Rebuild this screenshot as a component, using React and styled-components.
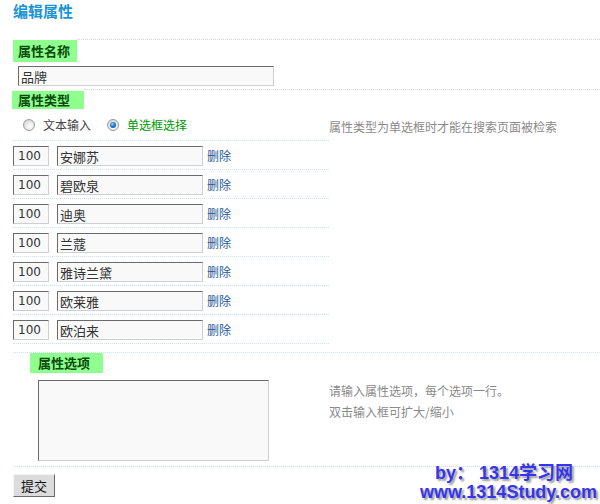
import React from "react";
import styled, { createGlobalStyle } from "styled-components";

const Global = createGlobalStyle`
  html, body { margin: 0; padding: 0; background: #fff; }
  body { font-family: "Noto Sans CJK SC", "Noto Sans", sans-serif; font-size: 12px; color: #333; }
`;

const Page = styled.div`
  position: relative;
  width: 587px;
  height: 504px;
  padding-left: 13px;
  overflow: hidden;
`;

const Title = styled.div`
  height: 39px;
  box-sizing: border-box;
  font-size: 15px;
  line-height: 21px;
  font-weight: bold;
  color: #1a94d4;
`;

const SectionHead = styled.div`
  display: flex;
  align-items: flex-start;
`;

const Rule = styled.div`
  flex: 1;
  border-top: 1px dotted ${(p) => p.$color || "#d4d4d4"};
`;

const Label = styled.div`
  box-sizing: border-box;
  width: ${(p) => p.$w}px;
  height: ${(p) => p.$h}px;
  margin-top: ${(p) => p.$mt || 0}px;
  margin-left: ${(p) => p.$ml || 0}px;
  padding-left: ${(p) => p.$pl}px;
  background: #8fff8f;
  color: #0a4a0a;
  font-weight: bold;
  font-size: 13px;
  line-height: ${(p) => p.$h}px;
`;

const Section = styled.div`
  padding-bottom: ${(p) => p.$pb || 0}px;
`;

const TopRuled = styled.div`
  border-top: 1px dotted #c6e2f6;
`;

const inputBase = `
  box-sizing: border-box;
  display: block;
  height: 20px;
  margin: 0;
  border-style: solid;
  border-width: 1px;
  border-color: #6a6a6a #cfcfcf #cfcfcf #6a6a6a;
  background: #f9f9f9;
  outline: none;
  color: #333;
`;

const NameInput = styled.input`
  ${inputBase}
  width: 256px;
  margin: 4px 0 3px 5px;
  padding: 0 2px;
  font-family: "Noto Sans CJK SC", sans-serif;
  font-size: 13px;
`;

const Columns = styled.div`
  display: grid;
  grid-template-columns: 316px 1fr;
`;

const Left = styled.div``;

const RadioRow = styled.div`
  display: flex;
  align-items: center;
  height: 31px;
  padding-left: 10px;
  border-bottom: 1px dotted #c6e2f6;
`;

const RadioItem = styled.label`
  display: flex;
  align-items: center;
  gap: 8px;
  margin-right: 16px;
  color: ${(p) => (p.$on ? "#009900" : "#444")};
  font-size: 12px;
  line-height: 14px;
`;

const RadioDot = styled.span`
  position: relative;
  display: inline-block;
  box-sizing: border-box;
  width: 12px;
  height: 12px;
  border-radius: 50%;
  border: 1px solid #9a9a9a;
  background: radial-gradient(circle at 60% 65%, #ffffff 0%, #e4e4e4 55%, #c4c4c4 100%);
  &::after {
    content: "";
    display: ${(p) => (p.$on ? "block" : "none")};
    position: absolute;
    left: 2px;
    top: 2px;
    width: 6px;
    height: 6px;
    border-radius: 50%;
    background: radial-gradient(circle at 40% 35%, #8fd0ff 0%, #1f7fd0 45%, #0a3f7a 100%);
  }
`;

const OptionRow = styled.div`
  display: flex;
  align-items: flex-start;
  height: 23px;
  padding-top: 5px;
  border-bottom: 1px dotted #c6e2f6;
`;

const OrderInput = styled.input`
  ${inputBase}
  width: 36px;
  padding: 0 0 0 4px;
  font-family: "DejaVu Sans", sans-serif;
  font-size: 12px;
`;

const ValueInput = styled.input`
  ${inputBase}
  width: 146px;
  margin-left: 8px;
  padding: 0 2px;
  font-family: "Noto Sans CJK SC", sans-serif;
  font-size: 13px;
`;

const DeleteLink = styled.a`
  margin-left: 4px;
  color: #1f5a9a;
  font-size: 12px;
  line-height: 20px;
  text-decoration: none;
  cursor: pointer;
`;

const Hint = styled.div`
  color: #8a8a8a;
  font-size: 12px;
  line-height: ${(p) => p.$lh || 14}px;
  padding-top: ${(p) => p.$pt || 0}px;
`;

const TextArea = styled.textarea`
  ${inputBase}
  width: 231px;
  height: 81px;
  margin: 7px 0 5px 25px;
  padding: 2px;
  resize: none;
  font-family: "Noto Sans CJK SC", sans-serif;
  font-size: 12px;
`;

const Footer = styled.div`
  border-top: 1px dotted #c6e2f6;
  padding-top: 7px;
`;

const Button = styled.button`
  box-sizing: border-box;
  width: 42px;
  height: 23px;
  padding: 0;
  margin: 0;
  background: #dcdcdc;
  border-style: solid;
  border-width: 1px;
  border-color: #f4f4f4 #6a6a6a #6a6a6a #f4f4f4;
  font-family: "Noto Sans CJK SC", sans-serif;
  font-size: 13px;
  color: #111;
  line-height: 20px;
`;

const Watermark = styled.div`
  position: absolute;
  left: 420px;
  top: 464px;
  font-family: "Liberation Sans", "Noto Sans CJK SC", sans-serif;
  font-weight: bold;
  font-size: 18px;
  line-height: 19px;
  color: #3535ee;
  text-shadow: 2px 2px 2px #9a9a9a;
  white-space: nowrap;
  pointer-events: none;
`;

const WaterLine = styled.div`
  padding-left: ${(p) => p.$pl || 0}px;
`;

const options = ["安娜苏", "碧欧泉", "迪奥", "兰蔻", "雅诗兰黛", "欧莱雅", "欧泊来"];

export default function App() {
  return (
    <>
      <Global />
      <Page>
        <Title>编辑属性</Title>
        <Section>
          <SectionHead>
            <Label $w={64} $h={22} $mt={1} $pl={5}>属性名称</Label>
            <Rule />
          </SectionHead>
          <NameInput defaultValue="品牌" />
        </Section>
        <Section $pb={8}>
          <SectionHead>
            <Label $w={72} $h={18} $mt={2} $ml={-1} $pl={6}>属性类型</Label>
            <Rule />
          </SectionHead>
          <Columns>
            <Left>
              <RadioRow>
                <RadioItem>
                  <RadioDot />
                  文本输入
                </RadioItem>
                <RadioItem $on>
                  <RadioDot $on />
                  单选框选择
                </RadioItem>
              </RadioRow>
              {options.map((o) => (
                <OptionRow key={o}>
                  <OrderInput defaultValue="100" />
                  <ValueInput defaultValue={o} />
                  <DeleteLink>删除</DeleteLink>
                </OptionRow>
              ))}
            </Left>
            <Hint $pt={11}>属性类型为单选框时才能在搜索页面被检索</Hint>
          </Columns>
        </Section>
        <TopRuled>
          <Label $w={73} $h={20} $mt={0} $ml={17} $pl={8}>属性选项</Label>
          <Columns>
            <Left>
              <TextArea />
            </Left>
            <Hint $lh={21} $pt={7}>
              请输入属性选项，每个选项一行。
              <br />
              双击输入框可扩大/缩小
            </Hint>
          </Columns>
        </TopRuled>
        <Footer>
          <Button>提交</Button>
        </Footer>
        <Watermark>
          <WaterLine $pl={15}>by： 1314学习网</WaterLine>
          <WaterLine>www.1314Study.com</WaterLine>
        </Watermark>
      </Page>
    </>
  );
}
